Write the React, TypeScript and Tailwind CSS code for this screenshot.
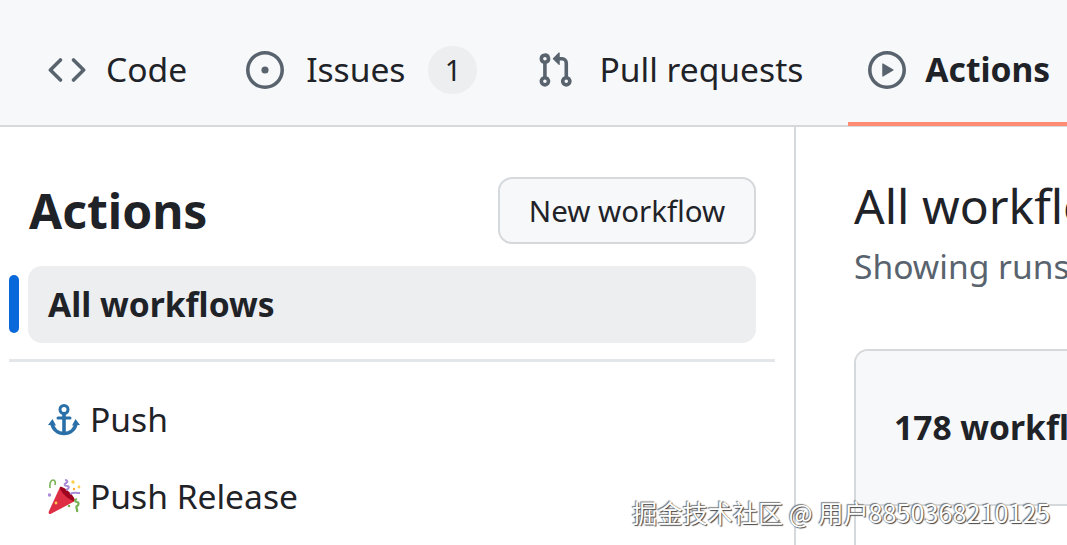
const font = { fontFamily: '"Noto Sans", sans-serif' };

function CodeIcon() {
  return (
    <svg viewBox="0 0 16 16" className="h-[38px] w-[38px] fill-[#59636e] shrink-0">
      <path d="m11.28 3.22 4.25 4.25a.75.75 0 0 1 0 1.06l-4.25 4.25a.749.749 0 0 1-1.275-.326.749.749 0 0 1 .215-.734L13.94 8l-3.72-3.72a.749.749 0 0 1 .326-1.275.749.749 0 0 1 .734.215Zm-6.56 0a.751.751 0 0 1 1.042.018.751.751 0 0 1 .018 1.042L2.06 8l3.72 3.72a.749.749 0 0 1-.326 1.275.749.749 0 0 1-.734-.215L.47 8.53a.75.75 0 0 1 0-1.06Z" />
    </svg>
  );
}

function IssueIcon() {
  return (
    <svg viewBox="0 0 16 16" className="h-[38px] w-[38px] fill-[#59636e] shrink-0">
      <path d="M8 9.5a1.5 1.5 0 1 0 0-3 1.5 1.5 0 0 0 0 3Z" />
      <path d="M8 0a8 8 0 1 1 0 16A8 8 0 0 1 8 0ZM1.5 8a6.5 6.5 0 1 0 13 0 6.5 6.5 0 0 0-13 0Z" />
    </svg>
  );
}

function PullIcon() {
  return (
    <svg viewBox="0 0 16 16" className="h-[38px] w-[38px] fill-[#59636e] shrink-0">
      <path d="M1.5 3.25a2.25 2.25 0 1 1 3 2.122v5.256a2.251 2.251 0 1 1-1.5 0V5.372A2.25 2.25 0 0 1 1.5 3.25Zm5.677-.177L9.573.677A.25.25 0 0 1 10 .854V2.5h1A2.5 2.5 0 0 1 13.5 5v5.628a2.251 2.251 0 1 1-1.5 0V5a1 1 0 0 0-1-1h-1v1.646a.25.25 0 0 1-.427.177L7.177 3.427a.25.25 0 0 1 0-.354ZM3.75 2.5a.75.75 0 1 0 0 1.5.75.75 0 0 0 0-1.5Zm0 9.5a.75.75 0 1 0 0 1.5.75.75 0 0 0 0-1.5Zm8.25.75a.75.75 0 1 0 1.5 0 .75.75 0 0 0-1.5 0Z" />
    </svg>
  );
}

function PlayIcon() {
  return (
    <svg viewBox="0 0 16 16" className="h-[38px] w-[38px] fill-[#59636e] shrink-0">
      <path d="M8 0a8 8 0 1 1 0 16A8 8 0 0 1 8 0ZM1.5 8a6.5 6.5 0 1 0 13 0 6.5 6.5 0 0 0-13 0Zm4.879-2.773 4.264 2.559a.25.25 0 0 1 0 .428l-4.264 2.559A.25.25 0 0 1 6 10.559V5.442a.25.25 0 0 1 .379-.215Z" />
    </svg>
  );
}

function AnchorEmoji() {
  return (
    <svg viewBox="0 0 32 34" className="h-[34px] w-[32px] shrink-0" fill="none">
      <circle cx="16" cy="6.5" r="4" stroke="#2a6fa8" strokeWidth="3" />
      <path d="M16 10v21" stroke="#2a6fa8" strokeWidth="3.6" />
      <path d="M10 15h12" stroke="#2a6fa8" strokeWidth="3" strokeLinecap="round" />
      <path d="M4 20c.5 6.5 6 10.5 12 10.5S27.5 26.5 28 20" stroke="#2a6fa8" strokeWidth="3.4" />
      <path d="M0 22l4.5-6 3.5 6.5zM32 22l-4.500-6-3.500 6.500z" fill="#2a6fa8" />
    </svg>
  );
}

function PartyEmoji() {
  return (
    <svg viewBox="0 0 34 36" className="h-[36px] w-[34px] shrink-0" fill="none">
      <path d="M12 8 .8 32.500c-.6 1.800.6 3 2.200 2.300L27 22z" fill="#dd2e44" />
      <path d="M12 8c3-1.500 15 9 15 14-3 1.500-16-9-15-14z" fill="#a0041e" />
      <path d="M2 9C1.500 5 2.500 1 5 1s2.500 3 2 5" stroke="#77b255" strokeWidth="1.600" />
      <path d="M17 1c3 0 3 2 1 3s-2 3 1 3 2 3-1 4" stroke="#aa8dd8" strokeWidth="2" />
      <path d="M22 15c3-2 7-1 10-1" stroke="#aa8dd8" strokeWidth="2" />
      <path d="M29 20c-3 1-2 3 0 3s2 3 0 4 1 3 0 6" stroke="#77b255" strokeWidth="2.200" />
      <circle cx="1.500" cy="16" r="1.700" fill="#aa8dd8" />
      <circle cx="25" cy="3" r="1.700" fill="#ffcc4d" />
      <circle cx="31" cy="8" r="1.400" fill="#ffcc4d" />
      <circle cx="26" cy="10" r="1.200" fill="#ffac33" />
      <circle cx="21" cy="27" r="1.300" fill="#77b255" />
      <circle cx="8" cy="24" r="1.400" fill="#ffcc4d" />
    </svg>
  );
}

export default function App() {
  return (
    <div className="relative h-[545px] w-[1067px] overflow-hidden bg-white text-[#1f2328]" style={font}>
      {/* repo tabs */}
      <nav className="flex h-[127px] items-stretch gap-[20px] whitespace-nowrap border-b-2 border-[#d6d9dc] bg-[#f6f8fa] pl-[28px] text-[33.6px]">
        <div className="flex items-center gap-[20px] px-[20px] pt-[14px]">
          <CodeIcon />
          <span>Code</span>
        </div>
        <div className="-ml-px flex items-center gap-[22px] pl-[20px] pr-[19px] pt-[14px]">
          <IssueIcon />
          <span>Issues</span>
          <span className="ml-px flex h-[48px] w-[49px] items-center justify-center rounded-full bg-[#eceef0] text-[29px]">1</span>
        </div>
        <div className="flex items-center gap-[25px] px-[20px] pt-[14px]">
          <PullIcon />
          <span>Pull requests</span>
        </div>
        <div className="ml-[5px] flex flex-1 items-center gap-[19px] border-b-[4px] border-[#fd8c73] pl-[20px] pt-[17px] font-bold -mb-px">
          <PlayIcon />
          <span>Actions</span>
        </div>
      </nav>

      <div className="flex h-[418px]">
        {/* workflow sidebar */}
        <aside className="w-[796px] shrink-0 border-r-2 border-[#d6d9dc] pl-[9px] pr-[19px]">
          <div className="flex h-[139px] items-center justify-between pl-[20px] pr-[19px] pt-[28px]">
            <h2 className="text-[48px] font-bold">Actions</h2>
            <button className="h-[67px] w-[258px] rounded-[14px] border-2 border-[#d6d9dc] bg-[#f6f8fa] pt-[2px] text-[29.5px]">New workflow</button>
          </div>
          <div className="relative mx-[19px] flex h-[77px] items-center rounded-[14px] bg-[#eceef0] pl-[20px] text-[33.6px] font-bold">
            <span className="absolute -left-[19px] top-[9px] h-[58px] w-[10px] rounded-full bg-[#0969da]" />
            All workflows
          </div>
          <div className="mt-[16px] h-[3px] bg-[#e4e7ea]" />
          <ul className="mt-[19px] text-[33.6px]">
            <li className="flex h-[77px] items-center gap-[10px] pl-[39px]">
              <AnchorEmoji />
              <span>Push</span>
            </li>
            <li className="flex h-[77px] items-center gap-[8px] pl-[39px]">
              <PartyEmoji />
              <span>Push Release</span>
            </li>
          </ul>
        </aside>

        {/* run list */}
        <main className="min-w-0 flex-1 pl-[58px] pt-[46px]">
          <h1 className="whitespace-nowrap text-[48px] leading-[66px]">All workflows</h1>
          <p className="mt-[4px] whitespace-nowrap text-[33.6px] leading-[46px] text-[#59636e]">Showing runs from all workflows</p>
          <div className="mt-[60px] w-[600px] rounded-t-[14px] border-x-2 border-t-2 border-[#d6d9dc]">
            <div className="flex h-[155px] items-center whitespace-nowrap rounded-t-[12px] border-b-2 border-[#d6d9dc] bg-[#f6f8fa] pl-[38px] text-[33.6px] font-bold">
              178 workflow runs
            </div>
            <div className="h-[60px]" />
          </div>
        </main>
      </div>

      {/* site watermark */}
      <div
        className="absolute left-[632px] top-[494px] whitespace-nowrap text-[25.2px] leading-[36px] text-white [text-shadow:1px_1px_1px_#444,-1px_-1px_1px_#777]"
        style={{ fontFamily: '"Noto Sans CJK SC", "Noto Sans", sans-serif' }}
      >
        掘金技术社区 @ 用户8850368210125
      </div>
    </div>
  );
}
